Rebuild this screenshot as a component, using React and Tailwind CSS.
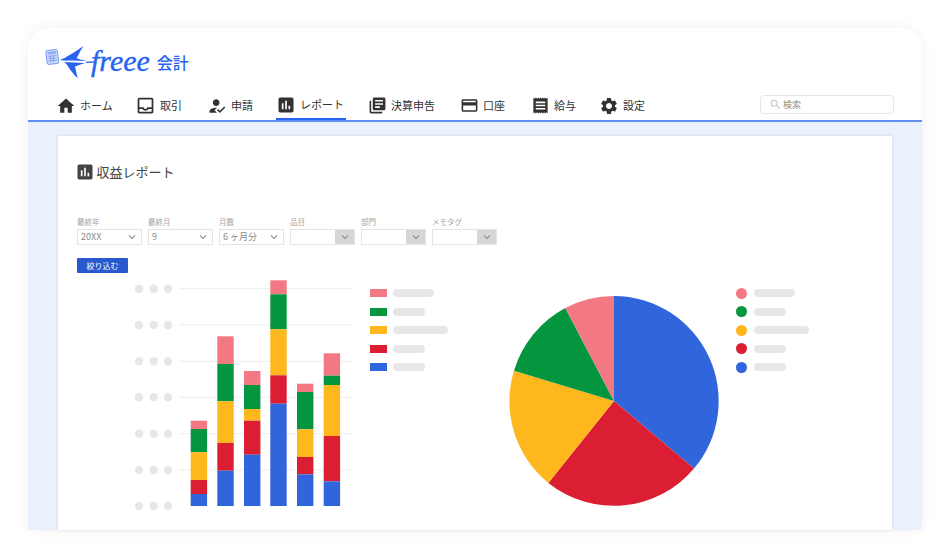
import {
  MdHome,
  MdOutlineInbox,
  MdHowToReg,
  MdAssessment,
  MdLibraryBooks,
  MdOutlineCreditCard,
  MdReceipt,
  MdSettings,
  MdSearch,
  MdKeyboardArrowDown,
} from "react-icons/md";

const navItems = [
  { label: "ホーム", icon: MdHome, cls: "ml-[28px] w-[56px]", size: 20 },
  { label: "取引", icon: MdOutlineInbox, cls: "ml-[23px] w-[45px]", size: 21 },
  { label: "申請", icon: MdHowToReg, cls: "ml-[27px] w-[45px]", size: 20 },
  { label: "レポート", icon: MdAssessment, cls: "ml-[24px] w-[70px] border-b-2 border-[#2864f0]", size: 20 },
  { label: "決算申告", icon: MdLibraryBooks, cls: "ml-[22px] w-[67px]", size: 19 },
  { label: "口座", icon: MdOutlineCreditCard, cls: "ml-[25px] w-[45px]", size: 19 },
  { label: "給与", icon: MdReceipt, cls: "ml-[26px] w-[43px]", size: 19 },
  { label: "設定", icon: MdSettings, cls: "ml-[25px] w-[46px]", size: 20 },
];

const filters = [
  { label: "最終年", value: "20XX" },
  { label: "最終月", value: "9" },
  { label: "月数", value: "6 ヶ月分" },
  { label: "品目", value: "", boxed: true },
  { label: "部門", value: "", boxed: true },
  { label: "メモタグ", value: "", boxed: true },
];

const PINK = "#f27983";
const GREEN = "#03963f";
const YELLOW = "#ffb71e";
const RED = "#dc1e32";
const BLUE = "#3165dc";

// y positions of the segments, top to bottom (pink, green, yellow, red, blue, base)
const bars = [
  { x: 190.7, ys: [420.7, 429, 452.3, 480, 494, 506] },
  { x: 217.3, ys: [336.3, 364, 401.3, 443, 470.7, 506] },
  { x: 244, ys: [371, 385, 409, 420.7, 454.7, 506] },
  { x: 270.3, ys: [280.3, 294.3, 329.3, 375.3, 403.7, 506] },
  { x: 297, ys: [383.7, 392, 429.3, 457, 474.3, 506] },
  { x: 323.7, ys: [353.3, 375.7, 385, 436, 481.3, 506] },
];
const segColors = [PINK, GREEN, YELLOW, RED, BLUE];
const gridYs = [288.7, 325, 361.3, 397.3, 433.7, 470, 506];

const legend = [
  { color: PINK, w: "w-[41px]" },
  { color: GREEN, w: "w-[32px]" },
  { color: YELLOW, w: "w-[55px]" },
  { color: RED, w: "w-[32px]" },
  { color: BLUE, w: "w-[32px]" },
];

const Logo = () => (
  <div className="flex items-center h-[40px] ml-[16px] mt-[14px] text-[#2864f0]">
    <svg viewBox="44 44 50 36" width="50" height="36" className="shrink-0">
      <g transform="rotate(-6 52 57)">
        <rect x="46.5" y="50" width="11.5" height="14" rx="1.5" fill="#cfdcfa" stroke="#6b93f0" strokeWidth="0.9" />
        <rect x="48" y="51.5" width="8.5" height="2.6" fill="#8fadf4" />
        <path d="M48 56h8.5M48 58.3h8.5M48 60.6h8.5M50.6 55v7.5M53.4 55v7.5" stroke="#6b93f0" strokeWidth="0.7" fill="none" />
      </g>
      <path d="M60 60 C63 58.5 65 58 67 56.5 C73 53 78 50 83.3 46 C81 50 78.5 54 76.7 58.3 C79 59.3 83 60.3 86.7 61 L70 60.6 C67 60.8 63.5 60.8 60 60 Z" fill="#2864f0" />
      <path d="M64 62 L85 63 C81.5 64.3 78 65.4 75 66.5 C75.8 70.5 76.8 74.5 77.7 78.3 C74 75 70 70 67.5 65.5 C66.5 64 65.5 63 64 62 Z" fill="#2864f0" />
      <path d="M86 62.4 L94 62" stroke="#2864f0" strokeWidth="1.3" fill="none" />
    </svg>
    <span className="text-[30px] leading-none italic [-webkit-text-stroke:0.4px_#2864f0] font-['Liberation_Serif',serif] -ml-[3px] mb-[3px]">freee</span>
    <span className="text-[16px] leading-none font-medium ml-[7px] font-['Noto_Sans_CJK_JP',sans-serif]">会計</span>
  </div>
);

const Header = () => (
  <header className="h-[94px] bg-white rounded-t-[20px] border-b-2 border-[#5f8ff0] flex flex-col">
    <Logo />
    <div className="flex items-stretch h-[26px] mt-[12px]">
      {navItems.map((item) => {
        const Icon = item.icon;
        return (
          <div key={item.label} className={`flex items-center gap-[4px] shrink-0 pb-[3px] text-[11px] text-[#323232] ${item.cls}`}>
            <Icon size={item.size} className="shrink-0" />
            <span className="whitespace-nowrap">{item.label}</span>
          </div>
        );
      })}
      <div className="ml-auto mr-[28px] mt-[1px] w-[134px] h-[19px] rounded-[4px] border border-[#e6e6e6] flex items-center pl-[8px] gap-[1px] text-[9px] text-[#8c8c8c]">
        <MdSearch size={13} className="text-[#c8c8c8]" />
        <span>検索</span>
      </div>
    </div>
  </header>
);

const Filter = ({ label, value, boxed }) => (
  <div className="w-[65px] flex flex-col">
    <span className="text-[7.5px] leading-[10px] text-[#a3a3a3] mb-[2px]">{label}</span>
    <div className="h-[16px] border border-[#e4e4e4] flex items-center justify-between text-[9px] text-[#8a8a8a]">
      <span className="pl-[3px] whitespace-nowrap">{value}</span>
      {boxed ? (
        <span className="w-[19px] h-full bg-[#d7d7d7] flex items-center justify-center text-[#8a8a8a]">
          <MdKeyboardArrowDown size={14} />
        </span>
      ) : (
        <MdKeyboardArrowDown size={14} className="mr-[2px] text-[#8a8a8a]" />
      )}
    </div>
  </div>
);

const Legend = ({ round }) => (
  <div className="flex flex-col gap-[10.6px] shrink-0">
    {legend.map((row) => (
      <div key={row.color} className={`flex items-center h-[8px] ${round ? "gap-[7px]" : "gap-[6.5px]"}`}>
        <span
          className={round ? "w-[11px] h-[11px] rounded-full -my-[2px]" : "w-[16.5px] h-[8px]"}
          style={{ backgroundColor: row.color }}
        />
        <span className={`h-[8px] rounded-full bg-[#e8e6e6] ${row.w}`} />
      </div>
    ))}
  </div>
);

const BarChart = () => (
  <svg viewBox="135 280 217 230" width="217" height="230" className="shrink-0">
    {gridYs.map((y) => (
      <g key={y}>
        {y < 506 && <line x1="179" x2="352" y1={y} y2={y} stroke="#eeeded" strokeWidth="1" />}
        <circle cx="139" cy={y} r="4.2" fill="#e8e6e6" />
        <circle cx="153.7" cy={y} r="4.2" fill="#e8e6e6" />
        <circle cx="168" cy={y} r="4.2" fill="#e8e6e6" />
      </g>
    ))}
    {bars.map((bar) =>
      segColors.map((color, i) => (
        <rect key={color} x={bar.x} y={bar.ys[i]} width="16.4" height={bar.ys[i + 1] - bar.ys[i]} fill={color} />
      ))
    )}
  </svg>
);

const PieChart = () => (
  <svg viewBox="509 296 210 210" width="210" height="210" className="shrink-0">
    <path d="M614 401 L614 296 A105 105 0 0 1 694 468.6 Z" fill={BLUE} />
    <path d="M614 401 L694 468.6 A105 105 0 0 1 548.3 482.9 Z" fill={RED} />
    <path d="M614 401 L548.3 482.9 A105 105 0 0 1 514 370.7 Z" fill={YELLOW} />
    <path d="M614 401 L514 370.7 A105 105 0 0 1 565.3 308 Z" fill={GREEN} />
    <path d="M614 401 L565.3 308 A105 105 0 0 1 614 296 Z" fill={PINK} />
  </svg>
);

export default function App() {
  return (
    <div className="w-[950px] h-[558px] bg-white overflow-hidden pt-[28px] pl-[28px] font-['Noto_Sans_CJK_JP','Noto_Sans',sans-serif]">
      <div className="w-[894px] h-[502px] rounded-t-[20px] bg-[#eaf1fd] shadow-[0_0_14px_rgba(0,0,0,0.06)] flex flex-col">
        <Header />
        <div className="flex-1 px-[30px] pt-[14px] min-h-0">
          <div className="h-full bg-white shadow-[0_0_3px_rgba(0,0,0,0.12)] pl-[19px] pt-[27px]">
            <div className="flex items-center gap-[2px] h-[18px] text-[13px] text-[#444444]">
              <MdAssessment size={20} className="-ml-[2.5px]" />
              <span>収益レポート</span>
            </div>
            <div className="flex gap-[6px] mt-[36px]">
              {filters.map((f) => (
                <Filter key={f.label} {...f} />
              ))}
            </div>
            <button className="block w-[51px] h-[15px] mt-[13px] rounded-[1px] bg-[#2859cf] text-white text-[8px] leading-[15px] text-center">
              絞り込む
            </button>
            <div className="flex items-start mt-[7px]">
              <div className="ml-[58px]">
                <BarChart />
              </div>
              <div className="ml-[18px] mt-[9px]">
                <Legend />
              </div>
              <div className="ml-[61px] mt-[16px]">
                <PieChart />
              </div>
              <div className="ml-[17px] mt-[9px]">
                <Legend round />
              </div>
            </div>
          </div>
        </div>
      </div>
    </div>
  );
}
